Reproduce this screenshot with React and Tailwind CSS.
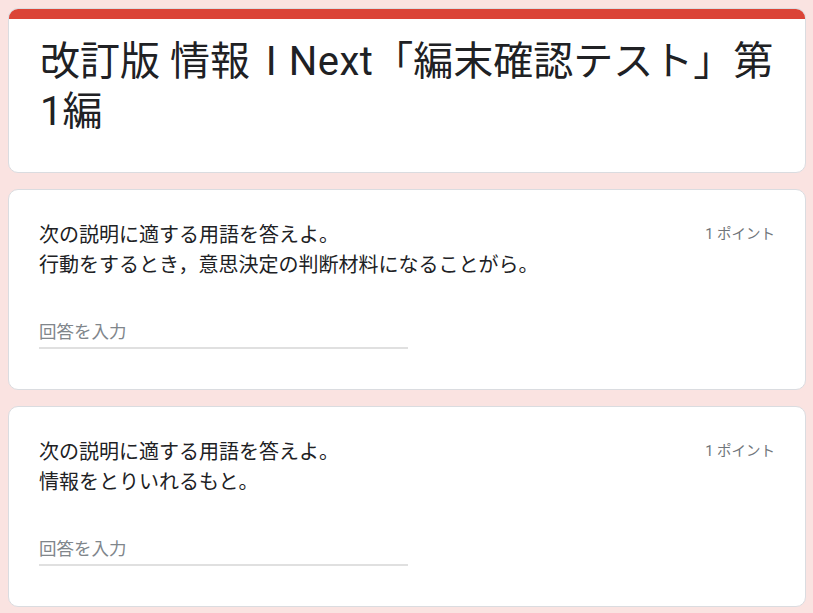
const FONT = { fontFamily: 'Roboto, "Noto Sans CJK JP", sans-serif' };

const questions = [
  {
    id: 1,
    lines: ["次の説明に適する用語を答えよ。", "行動をするとき，意思決定の判断材料になることがら。"],
    points: "1 ポイント",
  },
  {
    id: 2,
    lines: ["次の説明に適する用語を答えよ。", "情報をとりいれるもと。"],
    points: "1 ポイント",
  },
];

function QuestionCard({ q }) {
  return (
    <div className="rounded-[10px] border border-[#dadce0] bg-white px-[30px] pt-[30px] pb-[40px]">
      <div className="flex items-start justify-between gap-4">
        <div className="text-[20px] leading-[30px] text-[#202124]">
          {q.lines.map((l) => (
            <div key={l}>{l}</div>
          ))}
        </div>
        <div className="shrink-0 text-[14.5px] leading-[30px] text-[#70757a]">
          {q.points}
        </div>
      </div>
      <div className="mt-[38px] w-[369px] border-b-2 border-[#e0e0e0] pb-[1px]">
        <div className="text-[17.5px] leading-[28px] text-[#80868b]">回答を入力</div>
      </div>
    </div>
  );
}

export default function App() {
  return (
    <div className="min-h-screen bg-[#fae3e1] pl-2 pr-[7px] pt-2 pb-4" style={FONT}>
      <div className="flex flex-col gap-4">
        {/* HEADER */}
        <div className="overflow-hidden rounded-[10px] border border-[#dadce0] bg-white">
          <div className="h-[10px] bg-[#db4437]"></div>
          <h1 className="px-[31px] pt-[18px] pb-[35px] text-[40px] font-normal leading-[50px] text-[#202124]">
            改訂版 情報 <span className="ml-[6px] mr-[2px]">I</span> <span className="tracking-[0.5px]">Next</span>「編末確認テスト」第1編
          </h1>
        </div>

        {questions.map((q) => (
          <QuestionCard key={q.id} q={q} />
        ))}
      </div>
    </div>
  );
}
